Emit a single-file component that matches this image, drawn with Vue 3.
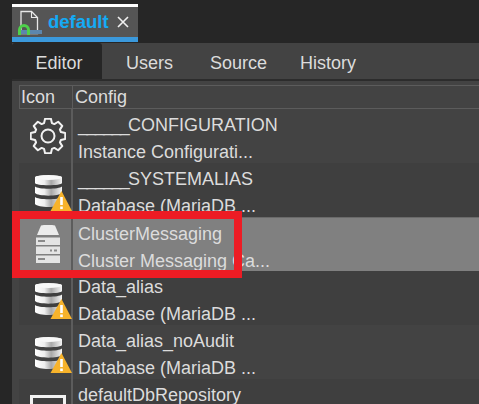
<script setup>
const rows = [
  { icon: 'gear', prefix: '______', a: 'CONFIGURATION', b: 'Instance Configurati...' },
  { icon: 'db', prefix: '______', a: 'SYSTEMALIAS', b: 'Database (MariaDB ...' },
  { icon: 'server', a: 'ClusterMessaging', b: 'Cluster Messaging Ca...', selected: true },
  { icon: 'db', a: 'Data_alias', b: 'Database (MariaDB ...' },
  { icon: 'db', a: 'Data_alias_noAudit', b: 'Database (MariaDB ...' },
  { icon: 'repo', a: 'defaultDbRepository', b: '' }
]
const tabs = ['Editor', 'Users', 'Source', 'History']

function gearPath() {
  const cx = 18, cy = 18, n = 8, outer = 17.5, inner = 13.5
  const pts = []
  for (let i = 0; i < n; i++) {
    const a = (i * 2 * Math.PI) / n
    const step = (2 * Math.PI) / n
    for (const [r, d] of [[inner, -0.30], [outer, -0.17], [outer, 0.17], [inner, 0.30]]) {
      const t = a + d * step * 1.25 - Math.PI / 2
      pts.push((cx + r * Math.cos(t)).toFixed(2) + ' ' + (cy + r * Math.sin(t)).toFixed(2))
    }
  }
  return 'M' + pts.join('L') + 'Z'
}
const gear = gearPath()
</script>

<template>
  <div class="page">
    <div class="tabstrip">
      <div class="doctab">
        <svg class="docicon" width="26" height="26" viewBox="0 0 26 26">
          <path d="M3 1.500H13.500L19.500 7.500V23.500H3Z" fill="#555" stroke="#e8e8e8" stroke-width="1.300"/>
          <path d="M13.500 1.500V7.500H19.500" fill="none" stroke="#e8e8e8" stroke-width="1.100"/>
          <rect x="1" y="20" width="23" height="4" fill="#5c86ad"/>
          <path d="M1.500 25V20a4.500 4.500 0 0 1 9 0V25" fill="none" stroke="#4ed14a" stroke-width="3"/>
        </svg>
        <span class="docname">default</span>
        <svg class="close" width="12" height="12" viewBox="0 0 12 12">
          <path d="M1 1L11 11M11 1L1 11" stroke="#f0f0f0" stroke-width="1.600" fill="none"/>
        </svg>
      </div>
    </div>
    <div class="panel">
      <div class="subtabs">
        <div v-for="(t, i) in tabs" :key="t" class="subtab" :class="{ active: i === 0 }">{{ t }}</div>
      </div>
      <div class="table">
        <div class="thead">
          <div class="c1">Icon</div>
          <div class="c2">Config</div>
        </div>
        <div v-for="r in rows" :key="r.a" class="row" :class="{ selected: r.selected }">
          <div class="iconcell">
            <svg v-if="r.icon === 'gear'" class="gearicon" width="36" height="36" viewBox="0 0 36 36" fill="none" stroke="#f2f2f2" stroke-width="2" stroke-linejoin="round">
              <path :d="gear"/>
              <circle cx="18" cy="18" r="6.500"/>
            </svg>
            <svg v-else-if="r.icon === 'db'" class="dbicon" width="37" height="37" viewBox="0 0 37 37">
              <defs>
                <linearGradient id="disc" x1="0" x2="1" y1="0" y2="0">
                  <stop offset="0" stop-color="#fff"/>
                  <stop offset=".35" stop-color="#eee"/>
                  <stop offset=".6" stop-color="#a8a8a8"/>
                  <stop offset="1" stop-color="#f4f4f4"/>
                </linearGradient>
              </defs>
              <path d="M0 3C0 .6 27 .6 27 3V9C27 12 0 12 0 9Z" fill="url(#disc)"/>
              <ellipse cx="13.500" cy="3.500" rx="13" ry="2.500" fill="#f8f8f8"/>
              <path d="M0 12.500C3 15.500 24 15.500 27 12.500V19C24 22.500 3 22.500 0 19Z" fill="url(#disc)"/>
              <path d="M0 23C3 26 24 26 27 23V30C24 34 3 34 0 30Z" fill="url(#disc)"/>
              <path d="M15.500 37 26.500 17 37 37Z" fill="#f7b32b"/>
              <rect x="25.200" y="23" width="2.600" height="8" fill="#fff"/>
              <rect x="25.200" y="32.500" width="2.600" height="2.600" fill="#fff"/>
            </svg>
            <svg v-else-if="r.icon === 'server'" class="servericon" width="24" height="38" viewBox="0 0 24 38">
              <path d="M5 0.500Q12 -1 19 0.500L23 10H1Z" fill="#ececec"/>
              <rect x="0" y="12.500" width="24" height="7.500" fill="#e4e4e4"/>
              <rect x="0" y="21.500" width="24" height="7.500" fill="#e4e4e4"/>
              <rect x="0" y="30.500" width="24" height="7.500" fill="#e4e4e4"/>
              <rect x="2" y="15" width="7" height="2" fill="#8a8a8a"/>
              <rect x="14" y="24.500" width="2" height="2" fill="#8a8a8a"/>
              <rect x="18" y="24.500" width="3" height="2" fill="#8a8a8a"/>
              <rect x="2" y="33" width="7" height="2" fill="#8a8a8a"/>
            </svg>
            <div v-else class="repo"></div>
          </div>
          <div class="textcell">
            <div class="line"><span v-if="r.prefix" class="under">{{ r.prefix }}</span>{{ r.a }}</div>
            <div class="line">{{ r.b }}</div>
          </div>
        </div>
      </div>
    </div>
    <div class="annotation"></div>
  </div>
</template>

<style scoped>
.page {
  position: relative;
  width: 479px;
  height: 404px;
  overflow: hidden;
  background: #262626;
  font-family: "Liberation Sans", Arial, sans-serif;
  font-size: 18px;
  color: #dcdcdc;
  padding-left: 12px;
  box-sizing: border-box;
}
.tabstrip { height: 43px; padding-top: 4px; box-sizing: border-box; }
.doctab {
  width: 126px;
  height: 38px;
  box-sizing: border-box;
  background: #555;
  border-top: 3px solid #fff;
  border-bottom: 5px solid #3b99dc;
  display: flex;
  align-items: flex-start;
  padding-left: 6px;
}
.docicon { flex: none; margin-top: 3px; }
.docname { color: #14aaf5; font-weight: 700; font-size: 18.500px; margin-left: 4px; line-height: 30px; }
.close { flex: none; margin-left: 8px; margin-top: 9px; }
.panel { background: #434343; height: 361px; }
.subtabs { display: flex; height: 38px; box-sizing: border-box; border-bottom: 2px solid #2c2c2c; }
.subtab {
  display: flex;
  align-items: center;
  padding-top: 4px;
  color: #dcdcdc;
}
.subtab.active { width: 90px; padding-left: 4px; box-sizing: border-box; justify-content: center; background: #262626; border-radius: 3px 3px 0 0; }
.subtab:nth-child(2) { margin-left: 24px; }
.subtab:nth-child(3) { margin-left: 37px; }
.subtab:nth-child(4) { margin-left: 33px; }
.table { padding: 4px 0 0 7px; }
.thead {
  display: flex;
  height: 24px;
  box-sizing: border-box;
  border-top: 1px solid #5c5c5c;
  border-bottom: 1px solid #5c5c5c;
  line-height: 23px;
}
.c1 { width: 54px; padding-left: 1px; box-sizing: border-box; border-left: 1px solid #5c5c5c; border-right: 1px solid #5c5c5c; }
.c2 { padding-left: 2px; }
.row { display: flex; height: 54px; background: #434343; }
.row:nth-child(odd) { background: #3f3f3f; }
.row.selected { background: #808080; border-top: 1px solid #6a6a6a; box-sizing: border-box; }
.iconcell {
  width: 54px;
  flex: none;
  box-sizing: border-box;
  border-right: 2px solid #5c5c5c;
  display: flex;
  align-items: center;
}
.gearicon { flex: none; margin-left: 11px; }
.dbicon { align-self: flex-start; margin-top: 11px; margin-left: 16px; flex: none; }
.servericon { align-self: flex-start; margin-top: 7px; margin-left: 17px; flex: none; }
.textcell { padding: 3px 0 0 5px; line-height: 27px; min-width: 0; white-space: nowrap; }
.under { letter-spacing: -1.670px; }
.repo { width: 36px; height: 30px; margin-left: 11px; border: 3px solid #f2f2f2; box-sizing: border-box; align-self: flex-start; margin-top: 16px; }
.annotation {
  position: absolute;
  left: 12px;
  top: 211px;
  width: 230px;
  height: 67px;
  box-sizing: border-box;
  border: 8px solid #ed1c24;
  pointer-events: none;
}
</style>
